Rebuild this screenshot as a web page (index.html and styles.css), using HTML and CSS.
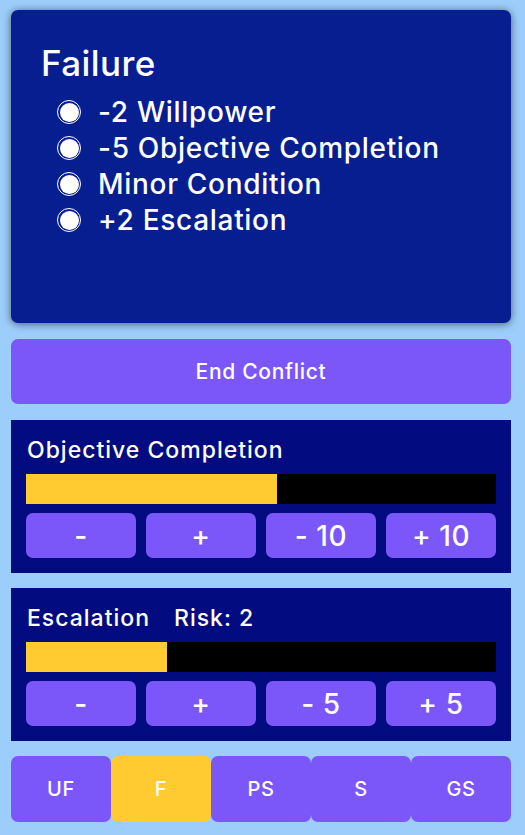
FILE: index.html
```html
<!DOCTYPE html>
<html>
<head>
<meta charset="utf-8">
<link rel="stylesheet" href="styles.css">
</head>
<body>
<div class="app">
  <section class="card">
    <h1 class="card-title">Failure</h1>
    <ul class="results">
      <li class="result"><span class="radio"></span>-2 Willpower</li>
      <li class="result"><span class="radio"></span>-5 Objective Completion</li>
      <li class="result"><span class="radio"></span>Minor Condition</li>
      <li class="result"><span class="radio"></span>+2 Escalation</li>
    </ul>
  </section>

  <button class="end-btn">End Conflict</button>

  <section class="panel">
    <div class="panel-title">Objective Completion</div>
    <div class="bar"><div class="bar-fill" style="width: 53.4%"></div></div>
    <div class="btn-row">
      <button class="step">-</button>
      <button class="step">+</button>
      <button class="step">- 10</button>
      <button class="step">+ 10</button>
    </div>
  </section>

  <section class="panel">
    <div class="panel-title"><span>Escalation</span><span>Risk: 2</span></div>
    <div class="bar"><div class="bar-fill" style="width: 30%"></div></div>
    <div class="btn-row">
      <button class="step">-</button>
      <button class="step">+</button>
      <button class="step">- 5</button>
      <button class="step">+ 5</button>
    </div>
  </section>

  <nav class="tabs">
    <button class="tab">UF</button>
    <button class="tab active">F</button>
    <button class="tab">PS</button>
    <button class="tab">S</button>
    <button class="tab">GS</button>
  </nav>
</div>
</body>
</html>
```

FILE: styles.css
```css
html, body {
  margin: 0;
  padding: 0;
  background: #9dcefb;
}
body {
  font-family: Inter, "Noto Sans", sans-serif;
  color: #fff;
}
.app {
  width: 500px;
  margin-left: 11px;
  padding-top: 10px;
  display: flex;
  flex-direction: column;
}
.card {
  background: #061e8f;
  border-radius: 7px;
  box-shadow: 0 1px 8px rgba(0, 0, 0, 0.55);
  height: 313px;
  box-sizing: border-box;
  padding: 33px 30px 0 30px;
}
.card-title {
  margin: 0;
  font-size: 35px;
  font-weight: 500;
  line-height: 40px;
  letter-spacing: 0.4px;
}
.results {
  list-style: none;
  margin: 11px 0 0 0;
  padding: 0 0 0 16px;
}
.result {
  display: flex;
  align-items: center;
  height: 36px;
  font-size: 28px;
  font-weight: 500;
  letter-spacing: 0.7px;
}
.radio {
  width: 24px;
  height: 24px;
  box-sizing: border-box;
  border: 1px solid #fff;
  border-radius: 50%;
  margin-right: 17px;
  display: flex;
  align-items: center;
  justify-content: center;
  flex: none;
}
.radio::after {
  content: "";
  width: 19px;
  height: 19px;
  border-radius: 50%;
  background: #fff;
}
button {
  font-family: Inter, "Noto Sans", sans-serif;
  color: #fff;
  border: none;
  padding: 0;
  cursor: pointer;
}
.end-btn {
  margin-top: 16px;
  height: 65px;
  background: #7b57fa;
  border-radius: 7px;
  font-size: 21px;
  font-weight: 500;
  letter-spacing: 0.7px;
}
.panel {
  margin-top: 16px;
  background: #020b80;
  height: 153px;
  box-sizing: border-box;
  padding: 14px 15px 0 15px;
}
.panel + .panel {
  margin-top: 15px;
}
.panel-title {
  font-size: 23px;
  font-weight: 500;
  line-height: 32px;
  letter-spacing: 1px;
  padding-left: 1px;
  display: flex;
  gap: 24px;
}
.bar {
  margin-top: 8px;
  height: 30px;
  background: #000;
}
.bar-fill {
  height: 100%;
  background: #ffcb31;
}
.btn-row {
  margin-top: 9px;
  display: grid;
  grid-template-columns: repeat(4, 1fr);
  gap: 10px;
}
.step {
  height: 45px;
  background: #7b57fa;
  border-radius: 7px;
  font-size: 28px;
  font-weight: 500;
  letter-spacing: 0.6px;
}
.tabs {
  margin-top: 15px;
  display: grid;
  grid-template-columns: repeat(5, 1fr);
  height: 66px;
}
.tab {
  background: #7b57fa;
  border-radius: 7px;
  font-size: 20px;
  font-weight: 500;
  letter-spacing: 0.6px;
}
.tab.active {
  background: #ffcb31;
}
```
